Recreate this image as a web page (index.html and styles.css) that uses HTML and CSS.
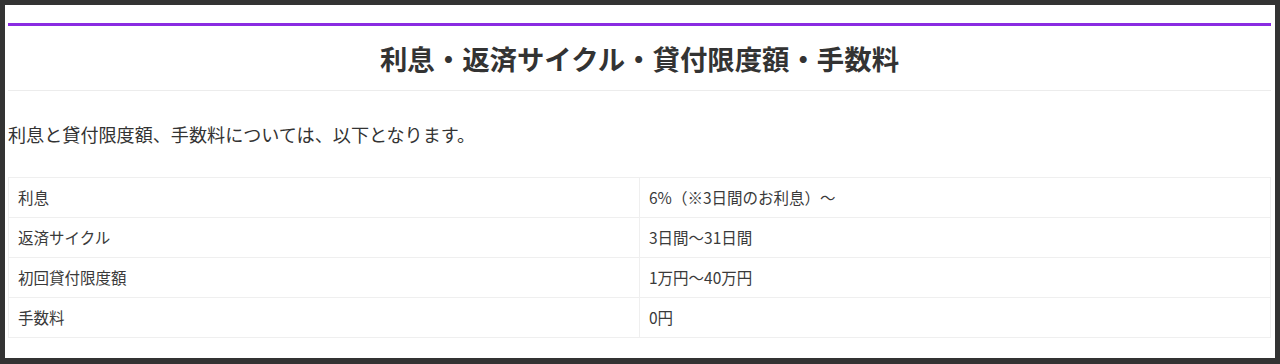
FILE: index.html
```html
<!DOCTYPE html>
<html lang="ja">
<head>
<meta charset="utf-8">
<title>利息・返済サイクル・貸付限度額・手数料</title>
<link rel="stylesheet" href="styles.css">
</head>
<body>
<div class="frame">
  <section class="section">
    <header class="section-head">
      <h2 class="section-title">利息・返済サイクル・貸付限度額・手数料</h2>
    </header>
    <p class="lead">利息と貸付限度額、手数料については、以下となります。</p>
    <table class="info-table">
      <colgroup><col class="col-label"><col class="col-value"></colgroup>
      <tbody>
        <tr><td>利息</td><td>6%（※3日間のお利息）～</td></tr>
        <tr><td>返済サイクル</td><td>3日間～31日間</td></tr>
        <tr><td>初回貸付限度額</td><td>1万円～40万円</td></tr>
        <tr><td>手数料</td><td>0円</td></tr>
      </tbody>
    </table>
  </section>
</div>
</body>
</html>
```

FILE: styles.css
```css
html, body {
  margin: 0;
  padding: 0;
}
body {
  background: #333333;
  font-family: "Noto Sans CJK JP", "Noto Sans", sans-serif;
  color: #333333;
}
.frame {
  margin: 5px;
  width: 1270px;
  height: 353px;
  background: #ffffff;
  box-sizing: border-box;
  padding: 18px 4px 0 3px;
  overflow: hidden;
}
.section-head {
  border-top: 3px solid #8a2be2;
  border-bottom: 1px solid #ececec;
  height: 68px;
  box-sizing: border-box;
  display: flex;
  align-items: center;
  justify-content: center;
}
.section-title {
  margin: 0;
  font-size: 27.4px;
  font-weight: 700;
  line-height: 1.4;
  color: #333333;
}
.lead {
  margin: 27px 0 0;
  font-size: 18.1px;
  line-height: 32px;
  color: #333333;
}
.info-table {
  margin-top: 27px;
  width: 100%;
  border-collapse: collapse;
  table-layout: fixed;
  font-size: 15.5px;
  color: #3a3a3a;
}
.col-label {
  width: 50%;
}
.col-value {
  width: 50%;
}
.info-table td {
  border: 1px solid #efefef;
  height: 39px;
  padding: 0 9px;
  vertical-align: middle;
  line-height: 1.5;
}
```
